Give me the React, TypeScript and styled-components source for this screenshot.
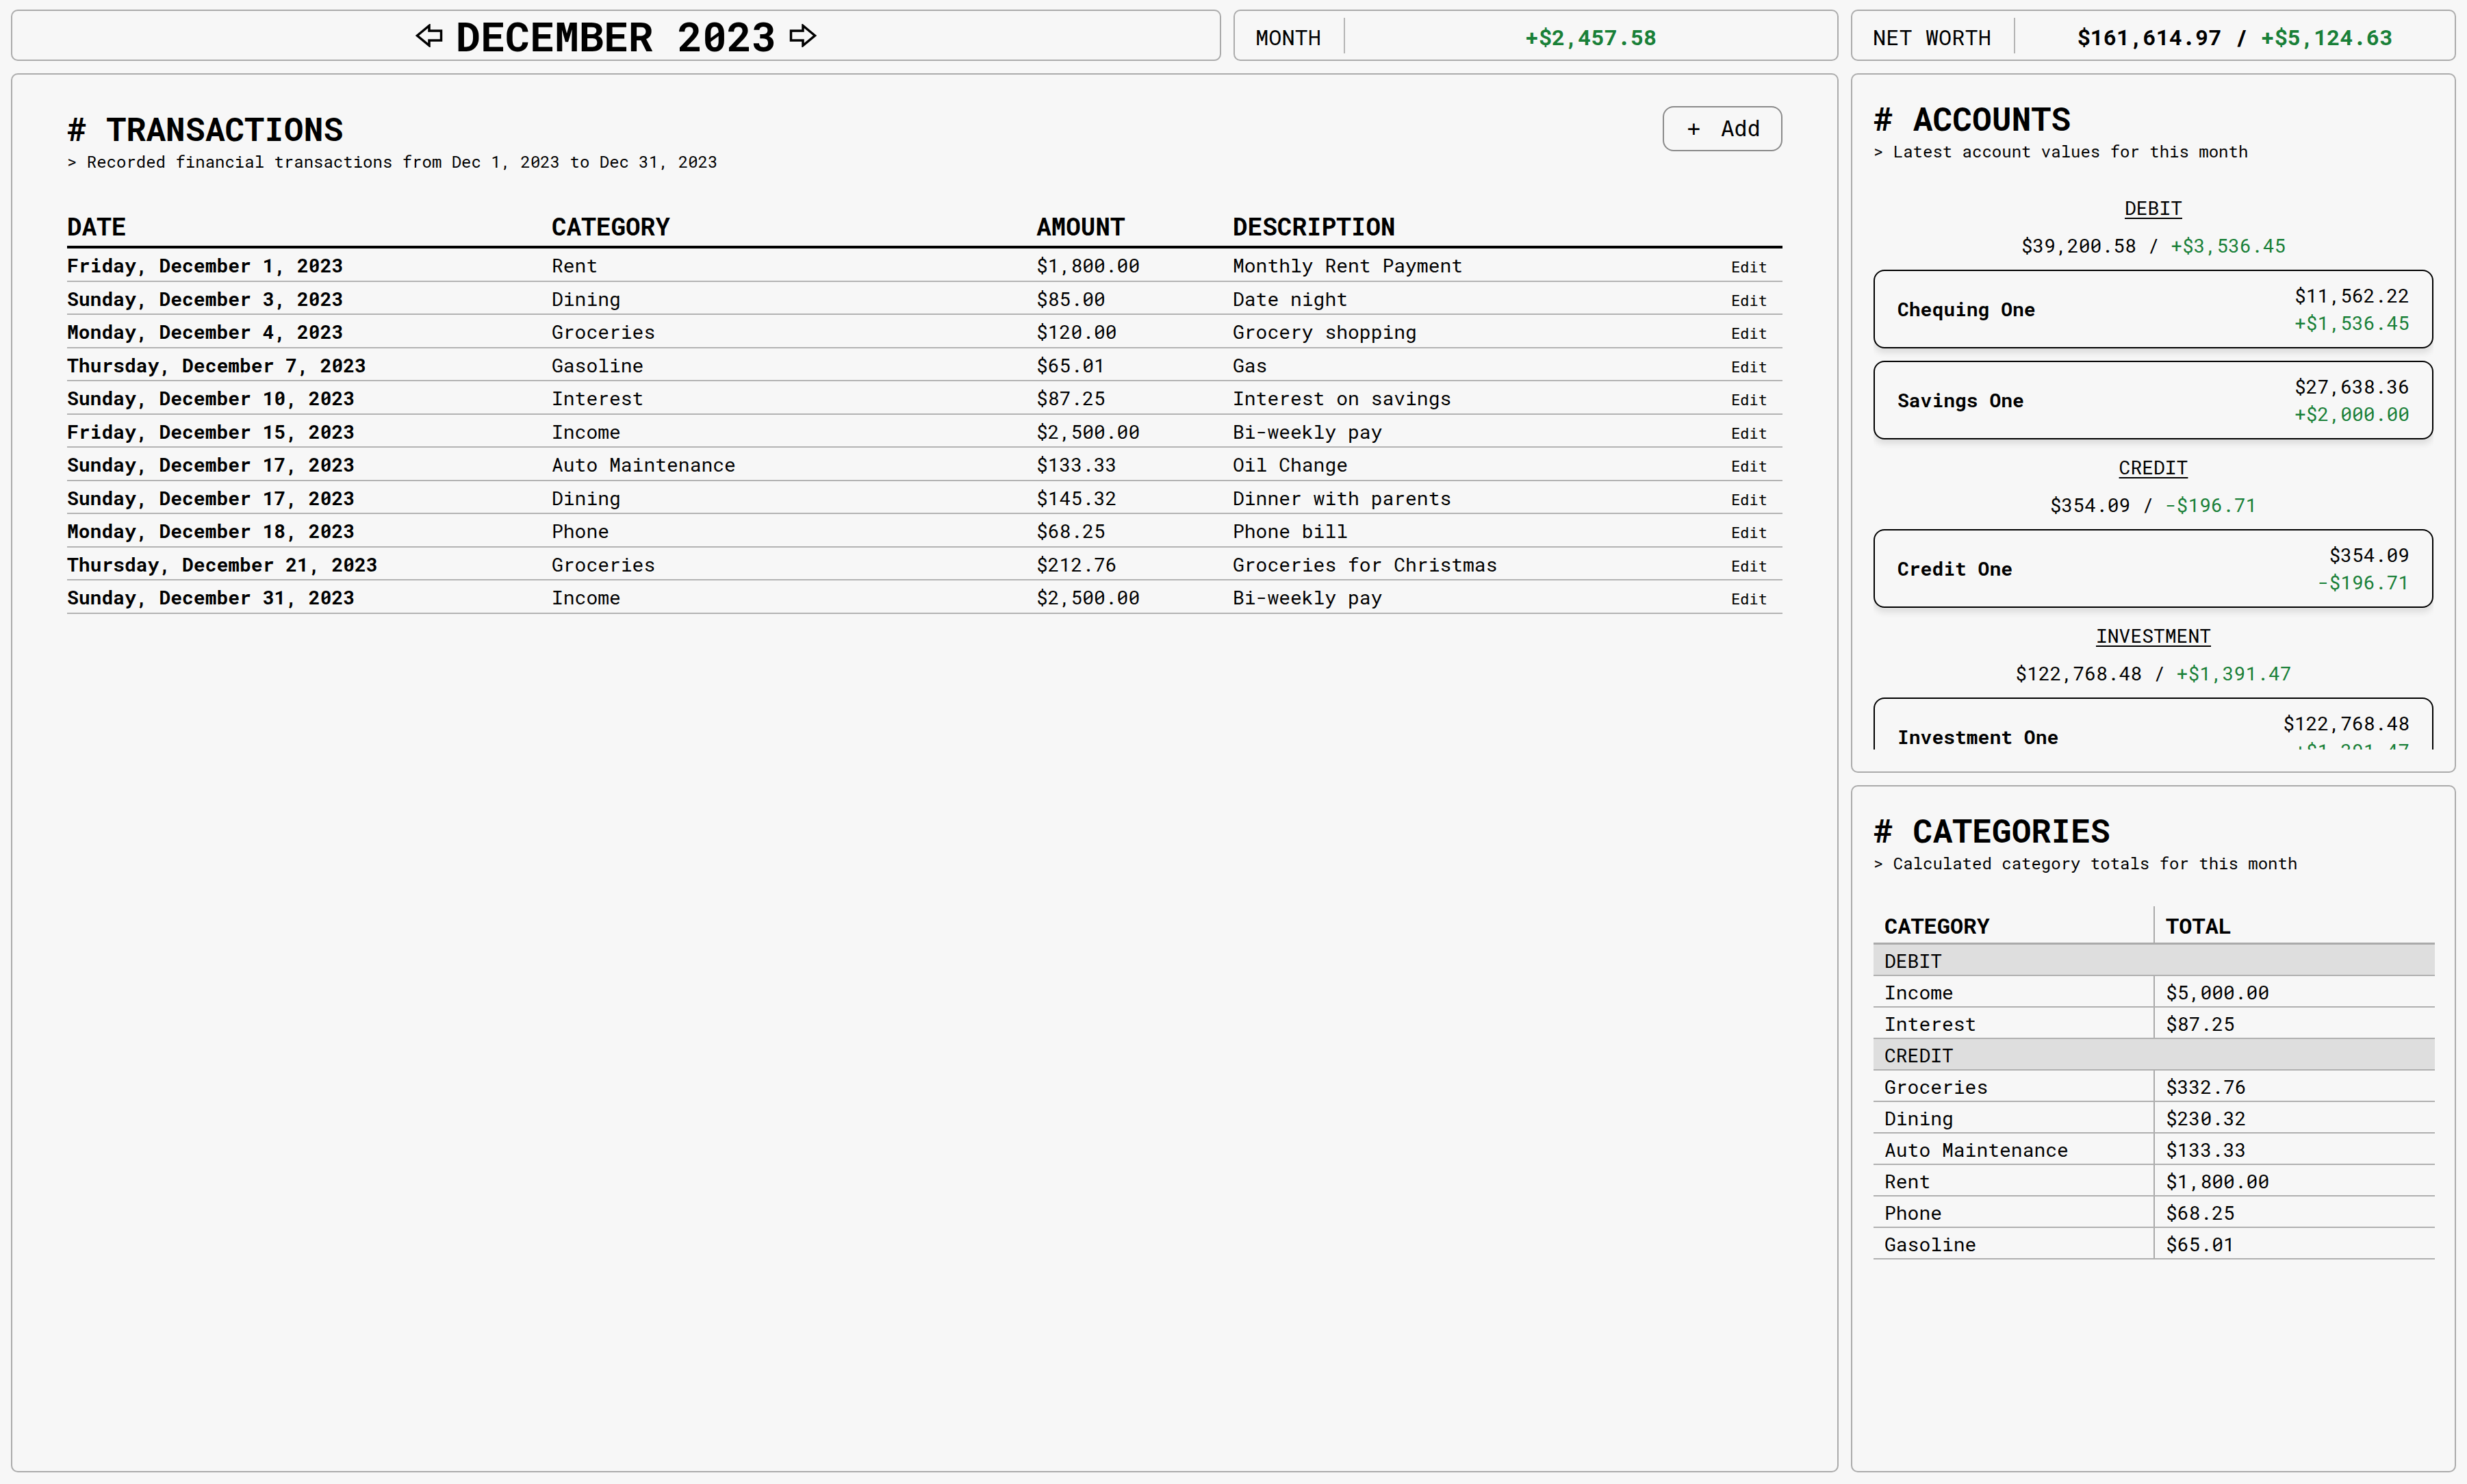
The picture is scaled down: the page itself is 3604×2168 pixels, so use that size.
import React from 'react';
import styled, { createGlobalStyle } from 'styled-components';

const GlobalStyle = createGlobalStyle`
  html, body {
    margin: 0;
    padding: 0;
    background: #f7f7f7;
  }
  * {
    box-sizing: border-box;
  }
  body {
    font-family: 'Roboto Mono', 'Liberation Mono', monospace;
    color: #000;
  }
`;

const GREEN = '#198038';

/* page grid: 2fr 1fr 1fr, transactions spans the first two columns */
const Page = styled.div`
  height: 100vh;
  padding: 14px 16px 17px;
  display: grid;
  grid-template-columns: 2fr 1fr 1fr;
  grid-template-rows: 75px 1021fr 1003fr;
  gap: 18px;
`;

const Box = styled.div`
  border: 2px solid #ababab;
  border-radius: 10px;
  background: #f7f7f7;
  min-width: 0;
  min-height: 0;
`;

const MonthSwitcher = styled(Box)`
  display: flex;
  align-items: center;
  justify-content: center;
  gap: 19px;
`;

const MonthTitle = styled.h1`
  margin: 0;
  font-size: 60px;
  line-height: 60px;
  font-weight: 700;
`;

const ArrowButton = styled.button`
  display: flex;
  padding: 0;
  border: none;
  background: none;
  cursor: pointer;
`;

const StatBox = styled(Box)`
  display: flex;
  align-items: stretch;
  padding: 10px 0 9px;
`;

const StatLabel = styled.div`
  display: flex;
  align-items: center;
  padding: 2px 33px 0 30px;
  border-right: 2px solid #b5b5b5;
  font-size: 32px;
  white-space: nowrap;
`;

const StatValue = styled.div`
  flex: 1;
  display: flex;
  align-items: center;
  justify-content: center;
  padding-top: 2px;
  font-size: 32px;
  font-weight: 700;
  white-space: pre;
`;

const Gain = styled.span`
  color: ${GREEN};
`;

/* transactions */
const TransactionsPanel = styled(Box)`
  grid-column: 1 / 3;
  grid-row: 2 / 4;
  padding: 46px 80px;
  display: flex;
  flex-direction: column;
`;

const PanelHeader = styled.div`
  display: flex;
  justify-content: space-between;
  align-items: flex-start;
`;

const TitleBlock = styled.div`
  padding-top: 9px;
`;

const Heading = styled.h2`
  margin: 0 0 8px;
  font-size: 48px;
  line-height: 48px;
  font-weight: 700;
`;

const Subtitle = styled.p`
  margin: 0;
  font-size: 24px;
  line-height: 32px;
  white-space: pre;
`;

const AddButton = styled.button`
  height: 66px;
  padding: 0 30px 0 34px;
  border: 2px solid #8a8a8a;
  border-radius: 16px;
  background: transparent;
  color: #000;
  font-family: 'DejaVu Sans Mono', monospace;
  font-size: 32px;
  white-space: pre;
  cursor: pointer;
`;

const PlusSign = styled.span`
  margin-right: 11px;
`;

const TxTable = styled.table`
  width: 100%;
  margin-top: 56px;
  border-collapse: collapse;
  table-layout: fixed;
`;

const Col = styled.col<{ $w?: string }>`
  width: ${p => p.$w || 'auto'};
`;

const TxHead = styled.th`
  padding: 0 0 7px;
  border-bottom: 4px solid #000;
  text-align: left;
  font-size: 36px;
  line-height: 44px;
  font-weight: 700;
`;

const TxCell = styled.td<{ $bold?: boolean }>`
  padding: 4px 0 0;
  border-bottom: 2px solid #b3b3b3;
  font-size: 28px;
  line-height: 42.5px;
  font-weight: ${p => (p.$bold ? 700 : 400)};
  white-space: nowrap;
  overflow: hidden;
`;

const EditCell = styled(TxCell)`
  text-align: right;
`;

const EditButton = styled.button`
  padding: 0 22px 0 0;
  border: none;
  background: none;
  color: #000;
  font-family: 'DejaVu Sans Mono', monospace;
  font-size: 22px;
  cursor: pointer;
`;

/* side panels */
const SidePanel = styled(Box)`
  padding: 40px 31px 32px;
  display: flex;
  flex-direction: column;
  overflow: hidden;
`;

const AccountsScroll = styled.div`
  flex: 1;
  min-height: 0;
  margin-top: 47px;
  overflow-y: auto;
  scrollbar-width: none;
  display: flex;
  flex-direction: column;
`;

const AccountGroup = styled.section`
  display: flex;
  flex-direction: column;
  & + & {
    margin-top: 21px;
  }
`;

const GroupTitle = styled.div`
  text-align: center;
  font-size: 28px;
  line-height: 40px;
  text-decoration: underline;
  text-underline-offset: 4px;
  text-decoration-thickness: 2px;
`;

const GroupTotal = styled.div`
  margin: 15px 0;
  text-align: center;
  font-size: 28px;
  line-height: 40px;
  white-space: pre;
`;

const AccountCard = styled.div`
  display: flex;
  justify-content: space-between;
  align-items: center;
  padding: 15.5px 33px;
  border: 2px solid #000;
  border-radius: 16px;
  box-shadow: 0 7px 10px rgba(0, 0, 0, 0.1);
  flex-shrink: 0;
  & + & {
    margin-top: 18px;
  }
`;

const AccountName = styled.div`
  font-size: 28px;
  font-weight: 700;
`;

const AccountValues = styled.div`
  display: flex;
  flex-direction: column;
  align-items: flex-end;
  font-size: 28px;
  line-height: 40px;
`;

const CatTable = styled.table`
  width: calc(100% + 2px);
  margin-top: 47px;
  border-collapse: collapse;
  table-layout: fixed;
`;

const CatHead = styled.th`
  padding: 8px 16px 5px;
  border-bottom: 3px solid #aaa;
  text-align: left;
  font-size: 32px;
  line-height: 40px;
  font-weight: 700;
  & + & {
    border-left: 2px solid #aaa;
  }
`;

const CatCell = styled.td<{ $group?: boolean }>`
  padding: 3px 16px 0;
  border-bottom: 2px solid #b0b0b0;
  background: ${p => (p.$group ? '#dedede' : 'transparent')};
  font-size: 28px;
  line-height: 41px;
  white-space: nowrap;
  & + & {
    border-left: 2px solid #aaa;
  }
`;

const Arrow = ({ dir }: { dir: 'left' | 'right' }) => (
  <svg
    width="40"
    height="34"
    viewBox="0 0 40 34"
    style={dir === 'right' ? { transform: 'scaleX(-1)' } : undefined}
  >
    <path
      d="M2.5 17 L20 2.5 V10 H37.5 V24 H20 V31.5 Z"
      fill="none"
      stroke="#000"
      strokeWidth="3.5"
      strokeLinejoin="miter"
    />
  </svg>
);

const transactions = [
  ['Friday, December 1, 2023', 'Rent', '$1,800.00', 'Monthly Rent Payment'],
  ['Sunday, December 3, 2023', 'Dining', '$85.00', 'Date night'],
  ['Monday, December 4, 2023', 'Groceries', '$120.00', 'Grocery shopping'],
  ['Thursday, December 7, 2023', 'Gasoline', '$65.01', 'Gas'],
  ['Sunday, December 10, 2023', 'Interest', '$87.25', 'Interest on savings'],
  ['Friday, December 15, 2023', 'Income', '$2,500.00', 'Bi-weekly pay'],
  ['Sunday, December 17, 2023', 'Auto Maintenance', '$133.33', 'Oil Change'],
  ['Sunday, December 17, 2023', 'Dining', '$145.32', 'Dinner with parents'],
  ['Monday, December 18, 2023', 'Phone', '$68.25', 'Phone bill'],
  ['Thursday, December 21, 2023', 'Groceries', '$212.76', 'Groceries for Christmas'],
  ['Sunday, December 31, 2023', 'Income', '$2,500.00', 'Bi-weekly pay'],
];

const accountGroups = [
  {
    name: 'DEBIT',
    total: '$39,200.58',
    change: '+$3,536.45',
    accounts: [
      { name: 'Chequing One', value: '$11,562.22', change: '+$1,536.45' },
      { name: 'Savings One', value: '$27,638.36', change: '+$2,000.00' },
    ],
  },
  {
    name: 'CREDIT',
    total: '$354.09',
    change: '-$196.71',
    accounts: [{ name: 'Credit One', value: '$354.09', change: '-$196.71' }],
  },
  {
    name: 'INVESTMENT',
    total: '$122,768.48',
    change: '+$1,391.47',
    accounts: [{ name: 'Investment One', value: '$122,768.48', change: '+$1,391.47' }],
  },
];

const categoryGroups = [
  {
    name: 'DEBIT',
    rows: [
      ['Income', '$5,000.00'],
      ['Interest', '$87.25'],
    ],
  },
  {
    name: 'CREDIT',
    rows: [
      ['Groceries', '$332.76'],
      ['Dining', '$230.32'],
      ['Auto Maintenance', '$133.33'],
      ['Rent', '$1,800.00'],
      ['Phone', '$68.25'],
      ['Gasoline', '$65.01'],
    ],
  },
];

const App: React.FC = () => {
  return (
    <>
      <GlobalStyle />
      <Page>
        <MonthSwitcher>
          <ArrowButton aria-label="previous month">
            <Arrow dir="left" />
          </ArrowButton>
          <MonthTitle>DECEMBER 2023</MonthTitle>
          <ArrowButton aria-label="next month">
            <Arrow dir="right" />
          </ArrowButton>
        </MonthSwitcher>

        <StatBox>
          <StatLabel>MONTH</StatLabel>
          <StatValue>
            <Gain>+$2,457.58</Gain>
          </StatValue>
        </StatBox>

        <StatBox>
          <StatLabel>NET WORTH</StatLabel>
          <StatValue>
            $161,614.97 / <Gain>+$5,124.63</Gain>
          </StatValue>
        </StatBox>

        <TransactionsPanel>
          <PanelHeader>
            <TitleBlock>
              <Heading># TRANSACTIONS</Heading>
              <Subtitle>{'> Recorded financial transactions from Dec 1, 2023 to Dec 31, 2023'}</Subtitle>
            </TitleBlock>
            <AddButton>
              <PlusSign>+</PlusSign> Add
            </AddButton>
          </PanelHeader>

          <TxTable>
            <colgroup>
              <Col $w="708px" />
              <Col $w="708px" />
              <Col $w="287px" />
              <Col />
              <Col $w="140px" />
            </colgroup>
            <thead>
              <tr>
                <TxHead>DATE</TxHead>
                <TxHead>CATEGORY</TxHead>
                <TxHead>AMOUNT</TxHead>
                <TxHead>DESCRIPTION</TxHead>
                <TxHead />
              </tr>
            </thead>
            <tbody>
              {transactions.map((t, i) => (
                <tr key={i}>
                  <TxCell $bold>{t[0]}</TxCell>
                  <TxCell>{t[1]}</TxCell>
                  <TxCell>{t[2]}</TxCell>
                  <TxCell>{t[3]}</TxCell>
                  <EditCell>
                    <EditButton>Edit</EditButton>
                  </EditCell>
                </tr>
              ))}
            </tbody>
          </TxTable>
        </TransactionsPanel>

        <SidePanel>
          <Heading># ACCOUNTS</Heading>
          <Subtitle>{'> Latest account values for this month'}</Subtitle>
          <AccountsScroll>
            {accountGroups.map(g => (
              <AccountGroup key={g.name}>
                <GroupTitle>{g.name}</GroupTitle>
                <GroupTotal>
                  {g.total} / <Gain>{g.change}</Gain>
                </GroupTotal>
                {g.accounts.map(a => (
                  <AccountCard key={a.name}>
                    <AccountName>{a.name}</AccountName>
                    <AccountValues>
                      <span>{a.value}</span>
                      <Gain>{a.change}</Gain>
                    </AccountValues>
                  </AccountCard>
                ))}
              </AccountGroup>
            ))}
          </AccountsScroll>
        </SidePanel>

        <SidePanel>
          <Heading># CATEGORIES</Heading>
          <Subtitle>{'> Calculated category totals for this month'}</Subtitle>
          <CatTable>
            <thead>
              <tr>
                <CatHead>CATEGORY</CatHead>
                <CatHead>TOTAL</CatHead>
              </tr>
            </thead>
            <tbody>
              {categoryGroups.map(g => (
                <React.Fragment key={g.name}>
                  <tr>
                    <CatCell $group colSpan={2}>
                      {g.name}
                    </CatCell>
                  </tr>
                  {g.rows.map(r => (
                    <tr key={r[0]}>
                      <CatCell>{r[0]}</CatCell>
                      <CatCell>{r[1]}</CatCell>
                    </tr>
                  ))}
                </React.Fragment>
              ))}
            </tbody>
          </CatTable>
        </SidePanel>
      </Page>
    </>
  );
};

export default App;
